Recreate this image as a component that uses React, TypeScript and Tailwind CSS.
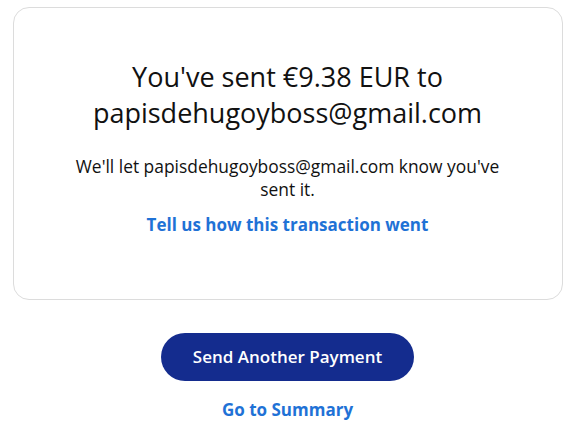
export default function App() {
  return (
    <div className="min-h-screen bg-white px-3 pt-[7px] font-['Open_Sans',sans-serif] text-[#111111]">
      <div className="mx-auto flex max-w-[550px] flex-col items-center rounded-2xl border border-[#dcdcdc] px-12 pt-[51px] pb-[62px] text-center">
        <h1 className="text-[27px] leading-9 font-normal">
          You've sent €9.38 EUR to papisdehugoyboss@gmail.com
        </h1>
        <p className="mt-6 text-[17.4px] leading-[23px]">
          We'll let papisdehugoyboss@gmail.com know you've sent it.
        </p>
        <a href="#" className="mt-3 text-[17px] leading-6 font-bold text-[#1f72d6]">
          Tell us how this transaction went
        </a>
      </div>
      <div className="flex flex-col items-center">
        <button className="mt-[33px] h-12 w-[253px] rounded-full bg-[#142c8e] text-[17px] font-semibold text-white">
          Send Another Payment
        </button>
        <a href="#" className="mt-[17px] text-[17px] leading-6 font-bold text-[#1f72d6]">
          Go to Summary
        </a>
      </div>
    </div>
  );
}
